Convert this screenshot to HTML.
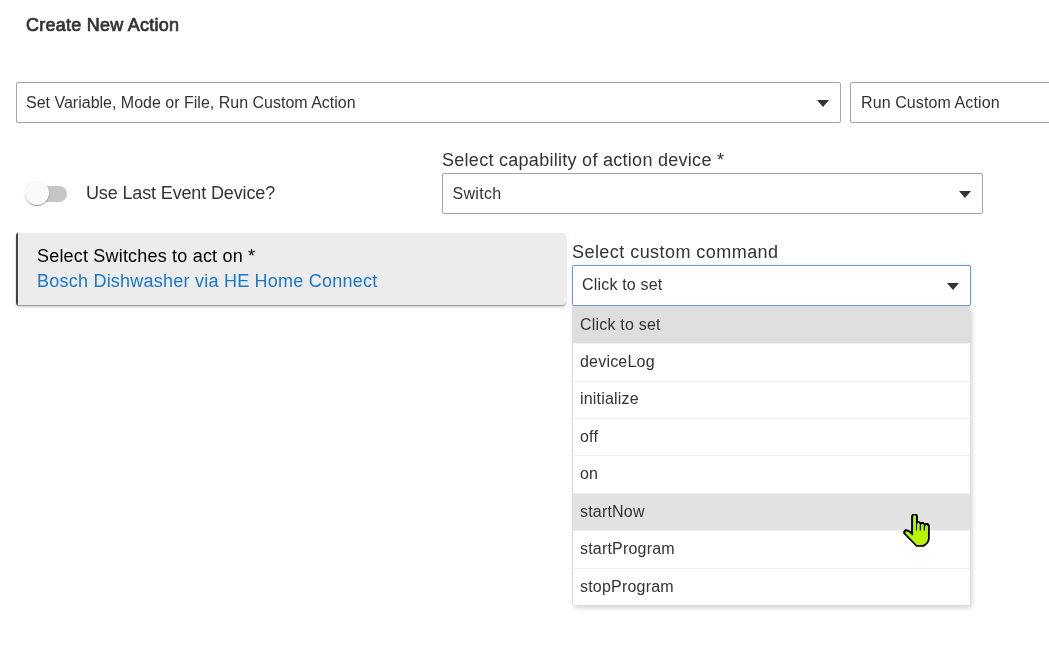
<!DOCTYPE html>
<html>
<head>
<meta charset="utf-8">
<style>
html{-webkit-font-smoothing:antialiased;} body{will-change:transform;} html,body{margin:0;padding:0;background:#fff;width:1049px;height:647px;overflow:hidden;position:relative;}
*{box-sizing:border-box;}
body{font-family:"Liberation Sans",sans-serif;color:#333;}
.abs{position:absolute;white-space:nowrap;}
.title{left:26px;top:14px;font-size:18px;font-weight:normal;line-height:22px;color:#333;letter-spacing:0.25px;-webkit-text-stroke:0.7px #333;}
.sel{position:absolute;border:1px solid #a5a5a5;border-radius:2px;background:#fff;}
.sel .txt{position:absolute;font-size:16px;line-height:20px;color:#333;white-space:nowrap;}
.arrow{position:absolute;width:0;height:0;border-left:6.5px solid transparent;border-right:6.5px solid transparent;border-top:7px solid #333;margin-left:-0.5px;}
.lbl{font-size:18px;line-height:22px;color:#333;}
.card{position:absolute;left:16px;top:233px;width:550px;height:72px;background:#ececec;border-left:2px solid #444;border-radius:2px 4px 4px 2px;box-shadow:0 2px 2px -1px rgba(0,0,0,0.3),0 1px 1px 0 rgba(0,0,0,0.14),0 2px 4px 0 rgba(0,0,0,0.12);}
.list{position:absolute;left:572px;top:306px;width:398px;height:299px;background:#fff;box-shadow:2px 3px 5px rgba(0,0,0,0.18);border-left:1px solid #ddd;border-radius:0 0 2px 2px;}
.hl{position:absolute;left:0;right:0;background:#dedede;}
.sep{position:absolute;left:0;right:0;height:1px;background:#f0f0f0;}
.it{position:absolute;left:7px;font-size:16px;line-height:20px;color:#333;white-space:nowrap;letter-spacing:0.2px;}
</style>
</head>
<body>
<div class="abs title">Create New Action</div>

<div class="sel" style="left:16px;top:82px;width:825px;height:41px;">
  <div class="txt" style="left:9px;top:10px;">Set Variable, Mode or File, Run Custom Action</div>
  <div class="arrow" style="left:800px;top:17px;"></div>
</div>
<div class="sel" style="left:850px;top:82px;width:260px;height:41px;">
  <div class="txt" style="left:10px;top:10px;letter-spacing:0.1px;">Run Custom Action</div>
</div>

<!-- toggle -->
<div class="abs" style="left:27px;top:186px;width:40px;height:16px;border-radius:8px;background:#c6c6c6;"></div>
<div class="abs" style="left:25px;top:181px;width:24px;height:24px;border-radius:50%;background:#fafafa;box-shadow:0 2px 1px -1px rgba(0,0,0,0.2),0 1px 1px 0 rgba(0,0,0,0.14),0 1px 3px 0 rgba(0,0,0,0.12);"></div>
<div class="abs lbl" style="left:86px;top:182px;letter-spacing:-0.14px;">Use Last Event Device?</div>

<div class="abs lbl" style="left:442px;top:149px;letter-spacing:0.28px;">Select capability of action device *</div>
<div class="sel" style="left:442px;top:173px;width:541px;height:41px;">
  <div class="txt" style="left:9.5px;top:10px;letter-spacing:0.3px;">Switch</div>
  <div class="arrow" style="left:516px;top:17px;"></div>
</div>

<div class="card">
  <div class="abs" style="left:19px;top:12px;font-size:18px;line-height:22px;color:#000;letter-spacing:0.19px;">Select Switches to act on *</div>
  <div class="abs" style="left:19px;top:37px;font-size:18px;line-height:22px;color:#1a77c9;letter-spacing:0.23px;">Bosch Dishwasher via HE Home Connect</div>
</div>

<div class="abs lbl" style="left:572px;top:241px;letter-spacing:0.45px;">Select custom command</div>
<div class="sel" style="left:572px;top:265px;width:399px;height:41px;border-color:#6f98d8;box-shadow:0 0 3px rgba(90,130,200,0.25);">
  <div class="txt" style="left:9px;top:9px;letter-spacing:0.18px;">Click to set</div>
  <div class="arrow" style="left:374px;top:17px;"></div>
</div>

<div class="list">
  <div class="sep" style="top:37px;"></div>
  <div class="sep" style="top:75px;"></div>
  <div class="sep" style="top:112px;"></div>
  <div class="sep" style="top:149px;"></div>
  <div class="sep" style="top:187px;"></div>
  <div class="sep" style="top:224px;"></div>
  <div class="sep" style="top:262px;"></div>
  <div class="hl" style="top:0;height:37px;"></div>
  <div class="hl" style="top:188px;height:36px;background:#e2e2e2;"></div>
  <div class="it" style="top:9px;">Click to set</div>
  <div class="it" style="top:46px;">deviceLog</div>
  <div class="it" style="top:83px;">initialize</div>
  <div class="it" style="top:121px;">off</div>
  <div class="it" style="top:158px;">on</div>
  <div class="it" style="top:196px;">startNow</div>
  <div class="it" style="top:233px;">startProgram</div>
  <div class="it" style="top:271px;">stopProgram</div>
</div>

<!-- cursor -->
<svg class="abs" style="left:898px;top:508px;" width="40" height="44" viewBox="0 0 40 44">
  <path d="M13.1 8.1 L14.1 6 L19 6 L20 8.1 L20 13.2 L21.9 13.2 L21.9 14 L26 14 L26 14.9 L30 14.9 L31.8 16.9 L31.8 30.6 Q31.6 35.5 25.7 38.8 L18.3 38.8 L5.2 25.6 L5.2 23.6 L7 21.3 L8.6 21.3 L11.8 22.6 L13.1 23.6 Z" fill="#000"/>
  <rect x="15.1" y="7.3" width="2.9" height="18" rx="1.4" fill="#b8f400"/>
  <rect x="19" y="14.9" width="2.7" height="10" rx="1.3" fill="#b8f400"/>
  <rect x="22.9" y="15.9" width="2.9" height="10" rx="1.4" fill="#b8f400"/>
  <rect x="27" y="16.9" width="3" height="10" rx="1.5" fill="#b8f400"/>
  <path d="M15.1 22.6 L30 22.6 L30 30.2 Q29.8 34.8 24.8 37.1 L18.8 37.1 L7.4 25.3 L7.4 24.3 L8.6 23.2 L11.4 24.4 L14.2 27.6 L15.1 26.8 Z" fill="#b8f400"/>
</svg>
</body>
</html>
